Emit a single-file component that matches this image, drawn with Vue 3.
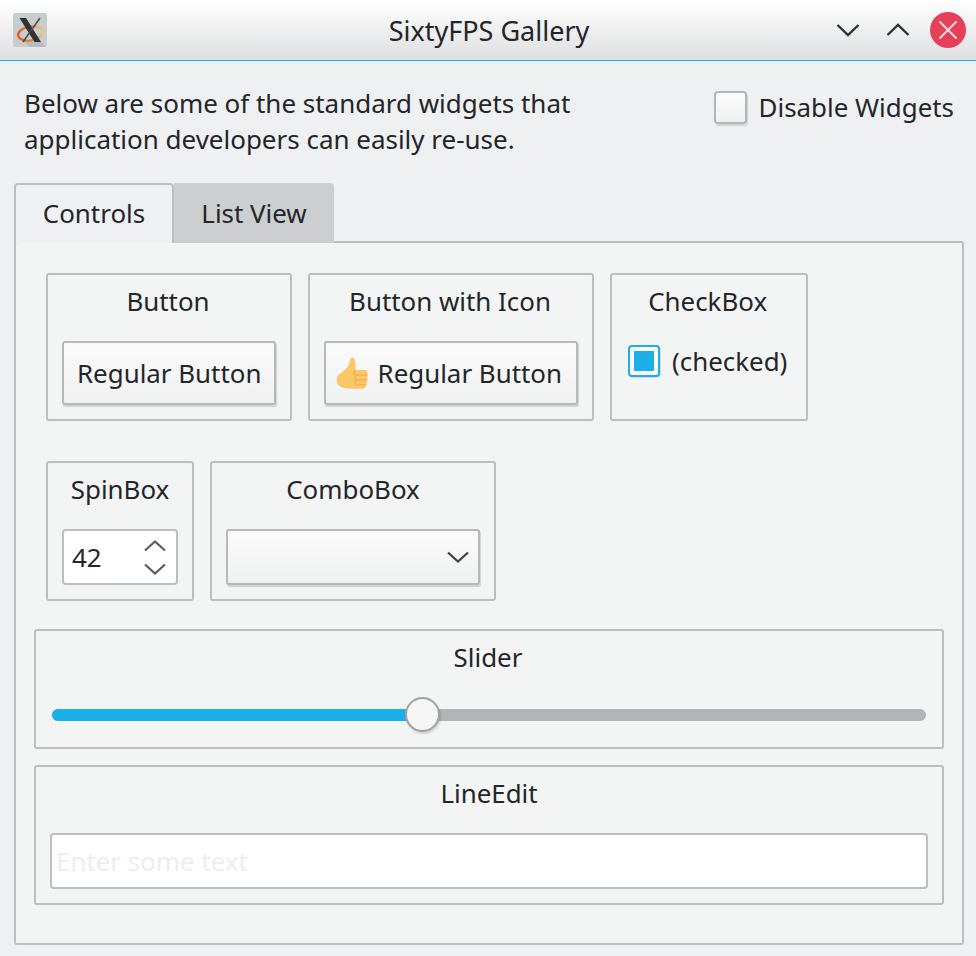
<script setup>
const firstRow = ['Button', 'Button with Icon', 'CheckBox']
</script>

<template>
  <div class="window">
    <header class="titlebar">
      <svg class="logo" width="34" height="34" viewBox="0 0 34 34">
        <defs>
          <linearGradient id="ring" x1="0" x2="1" y1="0" y2="0">
            <stop offset="0" stop-color="#e8521c" />
            <stop offset="0.6" stop-color="#f08a30" />
            <stop offset="1" stop-color="#e8c88a" />
          </linearGradient>
        </defs>
        <rect width="34" height="34" rx="3" fill="#c7cccd" />
        <path d="M12 29 H28 L33 34 H17 Z" fill="#b6bbbd" />
        <ellipse cx="17.5" cy="20.5" rx="12.5" ry="7" fill="none" stroke="url(#ring)" stroke-width="2.2" transform="rotate(-10 17.5 20.5)" />
        <path d="M6.5 5 H13 L28 29 H21.5 Z" fill="#2f3132" />
        <path d="M27 5 L10 29" stroke="#4a4c4d" stroke-width="1.5" fill="none" />
      </svg>
      <div class="title">SixtyFPS Gallery</div>
      <div class="controls">
        <svg width="24" height="14" viewBox="0 0 24 14"><path d="M1.5 2 L12 12 L22.5 2" /></svg>
        <svg width="24" height="14" viewBox="0 0 24 14"><path d="M1.5 12 L12 2 L22.5 12" /></svg>
        <span class="close">
          <svg width="20" height="20" viewBox="0 0 20 20"><path d="M1.5 1.5 L18.5 18.5 M18.5 1.5 L1.5 18.5" /></svg>
        </span>
      </div>
    </header>

    <main class="content">
      <div class="intro">
        <p class="intro-text">Below are some of the standard widgets that<br />application developers can easily re-use.</p>
        <label class="disable">
          <span class="box"></span>
          <span>Disable Widgets</span>
        </label>
      </div>

      <div class="tabs">
        <div class="tab active">Controls</div>
        <div class="tab">List View</div>
      </div>

      <section class="panel">
        <div class="row row-one">
          <div class="group group-button">
            <div class="group-title nudge">{{ firstRow[0] }}</div>
            <button class="btn">Regular Button</button>
          </div>
          <div class="group group-button">
            <div class="group-title nudge">{{ firstRow[1] }}</div>
            <button class="btn btn-icon">
              <svg class="thumb" width="32" height="32" viewBox="0 0 32 32">
                <path d="M1 20 C3 17 7 15 10 12 C13 9 14 5 14.5 2 C15 0 18 0 19 2 C20 5 20 9 19.5 13 L29 13 C31 13 32 15 32 17 C32 22 31.5 27 30 30 C29 32 27 32 25 32 L14 32 C10 32 6 31 3 29 C1 27 0 23 1 20 Z" fill="#fcc768" />
                <path d="M19.5 13 C18.5 15 19 17 20 18 H32 M20 18 C19 20 19 22 20 23 H31.8 M20 23 C19 25 19 27 20 28 H31" stroke="#eeaa4c" stroke-width="1.1" fill="none" />
              </svg>
              <span>Regular Button</span>
            </button>
          </div>
          <div class="group group-check">
            <div class="group-title">{{ firstRow[2] }}</div>
            <div class="check-line">
              <span class="check"><span class="check-fill"></span></span>
              <span>(checked)</span>
            </div>
          </div>
        </div>

        <div class="row row-two">
          <div class="group group-spin">
            <div class="group-title">SpinBox</div>
            <div class="spin">
              <span>42</span>
              <span class="arrows">
                <svg width="22" height="12" viewBox="0 0 22 12"><path d="M1 10.5 L11 1.5 L21 10.5" /></svg>
                <svg width="22" height="12" viewBox="0 0 22 12"><path d="M1 1.5 L11 10.5 L21 1.5" /></svg>
              </span>
            </div>
          </div>
          <div class="group group-combo">
            <div class="group-title">ComboBox</div>
            <div class="combo">
              <svg width="22" height="12" viewBox="0 0 22 12"><path d="M1 1.5 L11 10.5 L21 1.5" /></svg>
            </div>
          </div>
        </div>

        <div class="group wide slider-group">
          <div class="group-title nudge">Slider</div>
          <div class="slider">
            <div class="track"><div class="fill"></div></div>
            <div class="knob"></div>
          </div>
        </div>

        <div class="group wide edit-group">
          <div class="group-title">LineEdit</div>
          <div class="line-edit">Enter some text</div>
        </div>
      </section>
    </main>
  </div>
</template>

<style scoped>
.window {
  width: 976px;
  height: 956px;
  overflow: hidden;
  background: #eff0f1;
  color: #232629;
  font-family: "Noto Sans", sans-serif;
  font-size: 25.9px;
  line-height: 36px;
  box-sizing: border-box;
}
.titlebar {
  height: 61px;
  box-sizing: border-box;
  border-bottom: 1px solid #1db0e8;
  background: linear-gradient(#ffffff, #dedfe0);
  display: flex;
  align-items: center;
  position: relative;
  padding: 0 10px 0 13px;
}
.title {
  position: absolute;
  left: 0;
  right: 0;
  top: 13px;
  text-align: center;
  padding-left: 2px;
  font-size: 27px;
}
.controls {
  margin-left: auto;
  display: flex;
  align-items: center;
  gap: 26px;
}
.controls svg path { fill: none; stroke: #2f3234; stroke-width: 2.4; }
.close {
  width: 36px;
  height: 36px;
  border-radius: 50%;
  background: #e5405a;
  display: flex;
  align-items: center;
  justify-content: center;
  margin-left: -6px;
}
.controls .close svg path { stroke: #f2d6da; stroke-width: 2; }

.content { padding: 24px 12px 0 14px; }
.intro {
  display: flex;
  justify-content: space-between;
  padding-left: 10px;
  height: 98px;
}
.intro-text { margin: 0; font-size: 25.97px; }
.disable {
  display: flex;
  align-items: center;
  gap: 12px;
  height: 36px;
  margin-top: 4px;
  margin-right: 10px;
}
.box {
  width: 29px;
  height: 29px;
  border: 2px solid #b4b5b6;
  border-radius: 4px;
  background: linear-gradient(#fbfbfb, #f0f1f1);
  box-shadow: 1px 2px 1px rgba(0, 0, 0, 0.12);
}

.tabs { display: flex; height: 60px; }
.tab {
  box-sizing: border-box;
  height: 60px;
  width: 160px;
  text-align: center;
  padding: 12px 0 0;
  background: #cdced0;
  border-radius: 0 4px 0 0;
}
.tab.active {
  width: 160px;
  background: #eff0f1;
  border: 2px solid #bdbebf;
  border-bottom: 0;
  border-radius: 4px 4px 0 0;
  padding: 10px 0 0;
  position: relative;
  z-index: 1;
}

.panel {
  box-sizing: border-box;
  height: 704px;
  margin-top: -2px;
  border: 2px solid #bdbebf;
  border-radius: 3px;
  background: #f3f5f5;
  padding: 30px 18px 0;
  display: flex;
  flex-direction: column;
}
.row { display: flex; gap: 16px; padding: 0 12px; }
.row-one { height: 148px; margin-bottom: 40px; }
.row-two { height: 140px; margin-bottom: 28px; }
.group {
  box-sizing: border-box;
  border: 2px solid #bdbebf;
  border-radius: 3px;
  padding: 8px 14px 0;
  display: flex;
  flex-direction: column;
  align-items: center;
}
.group-title { height: 36px; text-align: center; white-space: nowrap; }
.group-title.nudge { padding-right: 2px; }

.btn {
  box-sizing: border-box;
  margin-top: 22px;
  width: 214px;
  height: 64px;
  padding: 0 13px;
  font: inherit;
  color: inherit;
  display: flex;
  align-items: center;
  white-space: nowrap;
  border: 2px solid #b7b8b9;
  border-radius: 3px;
  background: linear-gradient(#fbfbfb, #f0f1f1);
  box-shadow: 1px 2px 1px rgba(0, 0, 0, 0.14);
}
.btn-icon {
  width: 254px;
  padding: 0 14px 0 10px;
  gap: 10px;
}

.group-check { align-items: flex-start; padding: 8px 19px 0 16px; }
.group-check .group-title { align-self: center; }
.check-line {
  display: flex;
  align-items: center;
  gap: 12px;
  margin-top: 24px;
  height: 36px;
}
.check {
  box-sizing: border-box;
  width: 32px;
  height: 32px;
  border: 2px solid #1db0e8;
  border-radius: 4px;
  background: #fbfbfb;
  display: flex;
  align-items: center;
  justify-content: center;
  box-shadow: 1px 1px 1px rgba(0, 0, 0, 0.12);
}
.check-fill { width: 20px; height: 20px; background: #1db0e8; }

.spin {
  box-sizing: border-box;
  margin-top: 22px;
  width: 116px;
  height: 56px;
  border: 2px solid #bdbebf;
  border-radius: 4px;
  background: #fff;
  display: flex;
  align-items: center;
  justify-content: space-between;
  padding: 0 10px 0 8px;
}
.arrows { display: flex; flex-direction: column; gap: 11px; }
.arrows svg, .combo svg { display: block; }
.arrows path { fill: none; stroke: #5a5c5e; stroke-width: 2.2; }

.combo {
  box-sizing: border-box;
  margin-top: 22px;
  width: 254px;
  height: 56px;
  border: 2px solid #b7b8b9;
  border-radius: 3px;
  background: linear-gradient(#fbfbfb, #f0f1f1);
  box-shadow: 1px 2px 1px rgba(0, 0, 0, 0.14);
  display: flex;
  align-items: center;
  justify-content: flex-end;
  padding-right: 9px;
}
.combo path { fill: none; stroke: #3f4143; stroke-width: 2.2; }

.wide { width: 910px; }
.slider-group { height: 120px; margin-bottom: 16px; }
.slider {
  position: relative;
  width: 874px;
  height: 36px;
  margin-top: 22px;
}
.track {
  position: absolute;
  left: 0;
  right: 0;
  top: 12px;
  height: 12px;
  border-radius: 6px;
  background: #b3b4b5;
  overflow: hidden;
}
.fill { width: 370px; height: 100%; background: #1db0e8; }
.knob {
  position: absolute;
  left: 353px;
  top: 0;
  box-sizing: border-box;
  width: 35px;
  height: 35px;
  border-radius: 50%;
  border: 2px solid #a0a1a2;
  background: #f6f6f6;
  box-shadow: 1px 2px 2px rgba(0, 0, 0, 0.14);
}

.edit-group { height: 140px; }
.line-edit {
  box-sizing: border-box;
  width: 878px;
  height: 56px;
  margin-top: 22px;
  border: 2px solid #bdbebf;
  border-radius: 4px;
  background: #fff;
  color: #eeeeec;
  padding: 8px 4px;
}
</style>

<style>
body { background: #eff0f1; }
</style>
